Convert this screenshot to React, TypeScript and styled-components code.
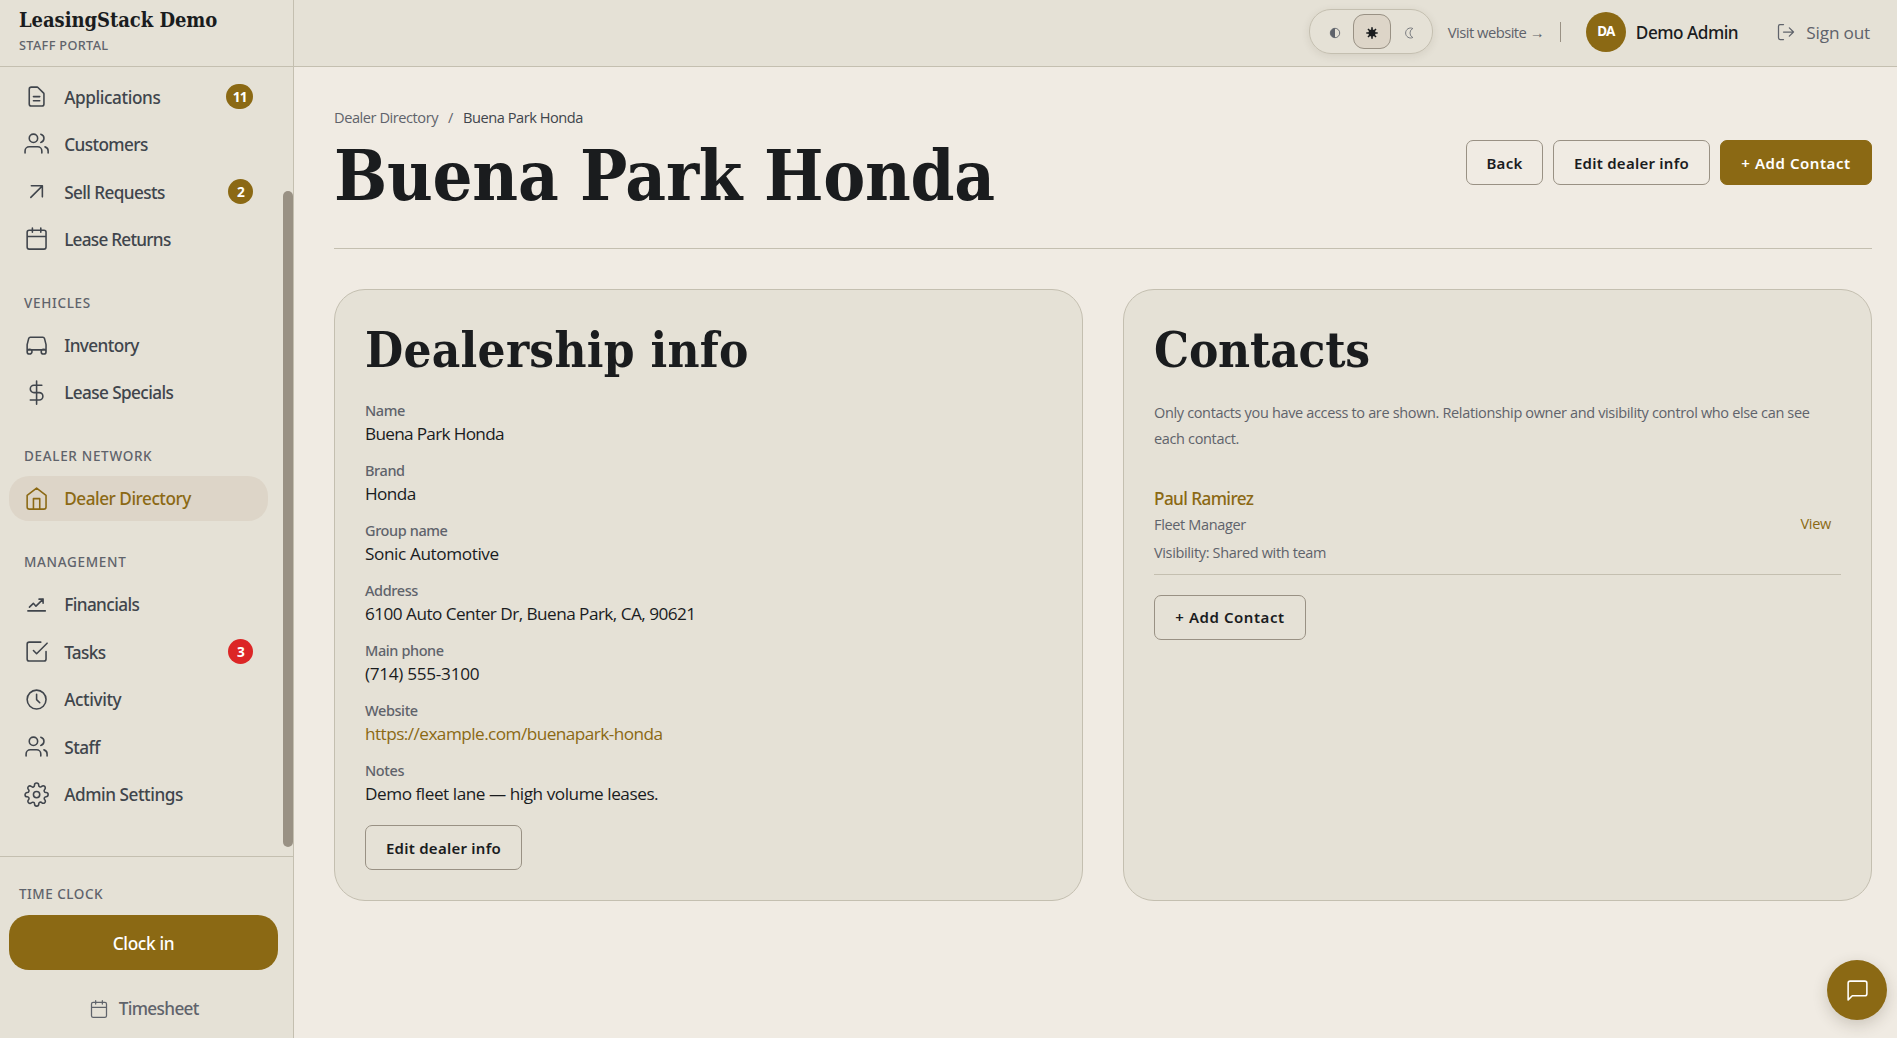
import React from "react";
import styled, { createGlobalStyle, css } from "styled-components";

const c = {
  page: "#f0ebe3",
  panel: "#e5e1d6",
  line: "#c4bfb0",
  strong: "#999184",
  gold: "#8b6914",
  ink: "#1a1c1e",
  text: "#40454c",
  muted: "#5f636b",
  active: "#ddd5c8",
  red: "#dc2626",
};
const sans = `"Open Sans", "Noto Sans", sans-serif`;
const sansMedium = `"Noto Sans", "Open Sans", sans-serif`;
const serif = `"DejaVu Serif Condensed", "DejaVu Serif", serif`;

const Global = createGlobalStyle`
  *, *::before, *::after { box-sizing: border-box; }
  body { margin: 0; background: ${c.page}; color: ${c.ink}; font: 400 17px/1.5 ${sans}; overflow: hidden; }
  button { font: inherit; cursor: pointer; }
  a { color: inherit; text-decoration: none; }
  h1, h2, p, dl, dt, dd { margin: 0; }
`;

const Shell = styled.div`
  display: grid;
  grid-template-columns: 294px minmax(0, 1fr);
  height: 100vh;
`;

/* Sidebar */
const Sidebar = styled.aside`
  display: flex;
  flex-direction: column;
  min-height: 0;
  background: ${c.panel};
  border-right: 1px solid ${c.line};
`;
const Brand = styled.div`
  flex: none;
  height: 67px;
  padding: 8px 0 0 19px;
  border-bottom: 1px solid ${c.line};
`;
const BrandName = styled.div`
  font: 700 20px/24px ${serif};
  letter-spacing: -0.05px;
  white-space: nowrap;
`;
const BrandSub = styled.div`
  margin-top: 3px;
  font: 500 12.7px/20px ${sansMedium};
  letter-spacing: 0.35px;
  color: ${c.muted};
`;
const NavArea = styled.div`
  flex: 1;
  min-height: 0;
  display: flex;
  justify-content: space-between;
`;
const Nav = styled.nav`
  width: 259px;
  margin: 7px 0 0 9px;
`;
const Group = styled.div`
  display: flex;
  flex-direction: column;
  gap: 2.25px;
  padding-bottom: 2.25px;
`;
const GroupLabel = styled.div`
  display: flex;
  align-items: flex-end;
  height: 56.25px;
  padding: 0 0 7.5px 15px;
  font: 500 13.5px/20px ${sansMedium};
  letter-spacing: 0.68px;
  color: ${c.muted};
`;
const NavItem = styled.a<{ $active?: boolean }>`
  display: flex;
  align-items: center;
  height: 45.22px;
  padding: 0 15px;
  border-radius: 20px;
  color: ${(p) => (p.$active ? c.gold : c.text)};
  background: ${(p) => (p.$active ? c.active : "transparent")};
`;
const NavText = styled.span<{ $ls?: number }>`
  flex: 1;
  margin-left: 15px;
  padding-top: 2px;
  font: 500 17.2px/24px ${sansMedium};
  letter-spacing: ${(p) => p.$ls ?? -0.6}px;
`;
const Badge = styled.span<{ $red?: boolean }>`
  min-width: 25px;
  height: 25px;
  padding: 0 6.5px;
  border-radius: 13px;
  background: ${(p) => (p.$red ? c.red : c.gold)};
  color: #fff;
  font: 700 13.7px/25px ${sansMedium};
  letter-spacing: -1px;
  text-align: center;
`;
const ScrollThumb = styled.div`
  width: 10px;
  height: 656px;
  margin-top: 124px;
  border-radius: 5px;
  background: ${c.strong};
`;
const Clock = styled.div`
  flex: none;
  display: flex;
  flex-direction: column;
  height: 182px;
  padding: 27px 15px 0 9px;
  border-top: 1px solid ${c.line};
`;
const ClockLabel = styled.div`
  padding-left: 10px;
  font: 500 13.5px/20px ${sansMedium};
  letter-spacing: 0.5px;
  color: ${c.muted};
`;
const ClockButton = styled.button`
  height: 55px;
  margin-top: 11px;
  padding: 2px 0 0;
  border: 0;
  border-radius: 20px;
  background: ${c.gold};
  color: #fff;
  font: 500 17.3px/24px ${sansMedium};
  letter-spacing: -0.35px;
`;
const Timesheet = styled.a`
  display: flex;
  justify-content: center;
  align-items: center;
  gap: 9.5px;
  margin-top: 26.5px;
  padding-left: 1px;
  color: ${c.muted};
  font: 500 17.2px/24px ${sansMedium};
  letter-spacing: -0.65px;
`;

/* Top bar */
const Main = styled.div`
  display: flex;
  flex-direction: column;
  min-width: 0;
`;
const TopBar = styled.header`
  flex: none;
  display: flex;
  justify-content: flex-end;
  align-items: center;
  height: 67px;
  padding: 0 27px 3px 0;
  background: ${c.panel};
  border-bottom: 1px solid ${c.line};
  white-space: nowrap;
`;
const ThemeSwitch = styled.div`
  display: flex;
  justify-content: space-between;
  width: 124px;
  height: 45px;
  margin-right: 15px;
  padding: 4px 5px 4px 7px;
  border: 1px solid ${c.line};
  border-radius: 22px;
  box-shadow: 0 2px 9px rgba(60, 50, 30, 0.1);
`;
const ThemeOption = styled.button<{ $on?: boolean }>`
  display: flex;
  align-items: center;
  justify-content: center;
  width: ${(p) => (p.$on ? 38 : 36)}px;
  height: 35px;
  padding: 3px 0 0;
  border: 1px solid ${(p) => (p.$on ? c.strong : "transparent")};
  border-radius: 11px;
  background: ${(p) => (p.$on ? c.active : "transparent")};
  color: ${(p) => (p.$on ? c.ink : c.muted)};
`;
const VisitLink = styled.a`
  width: 112px;
  padding-top: 2px;
  font-size: 14.8px;
  letter-spacing: -0.55px;
  color: ${c.muted};
`;
const Divider = styled.span`
  width: 1px;
  height: 20px;
  background: ${c.strong};
`;
const Avatar = styled.span`
  width: 40px;
  height: 40px;
  margin: 0 10px 0 25px;
  border-radius: 50%;
  background: ${c.gold};
  color: #fff;
  font: 700 13.5px/38px ${sansMedium};
  letter-spacing: -0.8px;
  text-align: center;
`;
const UserName = styled.span`
  width: 140.5px;
  padding-top: 2.5px;
  font: 500 17.2px/24px ${sansMedium};
  letter-spacing: -0.5px;
`;
const SignOut = styled.a`
  display: flex;
  align-items: center;
  gap: 10px;
  color: ${c.muted};
  font-size: 17.2px;
  letter-spacing: -0.18px;
  line-height: 24px;
`;
const SignOutText = styled.span`
  padding-top: 2.5px;
`;

/* Page */
const Page = styled.main`
  padding: 38px 25px 0 40px;
`;
const PageHead = styled.div`
  display: flex;
  justify-content: space-between;
  align-items: center;
  padding-bottom: 36px;
  border-bottom: 1px solid ${c.line};
`;
const Crumbs = styled.div`
  display: flex;
  gap: 10px;
  font-size: 14.6px;
  line-height: 25px;
  letter-spacing: -0.45px;
  color: ${c.muted};
`;
const CrumbHere = styled.span`
  color: ${c.text};
`;
const Title = styled.h1`
  margin-top: 10px;
  font: 700 70px/72px ${serif};
  letter-spacing: -0.25px;
  white-space: nowrap;
`;
const Actions = styled.div`
  display: flex;
  gap: 10px;
  padding-top: 8px;
`;
const Button = styled.button<{ $primary?: boolean; $w: number; $ls?: number }>`
  width: ${(p) => p.$w}px;
  height: 45px;
  padding: 0;
  border: 1px solid ${c.strong};
  border-radius: 7px;
  background: transparent;
  color: ${c.ink};
  font: 600 15px/22px ${sansMedium};
  letter-spacing: ${(p) => p.$ls ?? 0.25}px;
  white-space: nowrap;
  ${(p) =>
    p.$primary &&
    css`
      border-color: ${c.gold};
      background: ${c.gold};
      color: #fff;
    `}
`;
const Cards = styled.div`
  display: grid;
  grid-template-columns: 1fr 1fr;
  gap: 40px;
  margin-top: 40px;
`;
const Card = styled.section`
  height: 612px;
  padding: 31px 30px;
  border: 1px solid ${c.line};
  border-radius: 31px;
  background: ${c.panel};
`;
const CardTitle = styled.h2<{ $ls: number }>`
  margin-bottom: 19.5px;
  font: 700 49px/59.5px ${serif};
  letter-spacing: ${(p) => p.$ls}px;
`;
const Fields = styled.dl`
  display: flex;
  flex-direction: column;
  gap: 14px;
  margin-bottom: 19px;
`;
const FieldName = styled.dt`
  margin-bottom: 2px;
  font: 500 14.5px/20px ${sansMedium};
  letter-spacing: -0.4px;
  color: ${c.muted};
`;
const FieldValue = styled.dd<{ $link?: boolean; $ls?: number }>`
  font-size: 17.2px;
  line-height: 24px;
  letter-spacing: ${(p) => p.$ls ?? -0.54}px;
  color: ${(p) => (p.$link ? c.gold : c.ink)};
`;
const Hint = styled.p`
  font-size: 14.5px;
  line-height: 26px;
  letter-spacing: -0.345px;
  color: ${c.muted};
`;
const Contact = styled.div`
  display: flex;
  justify-content: space-between;
  align-items: center;
  margin: 33.6px 0 20px;
  padding: 0 10px 9px 0;
  border-bottom: 1px solid ${c.line};
`;
const ContactName = styled.div`
  font: 500 17.2px/26px ${sansMedium};
  letter-spacing: -0.6px;
  color: ${c.gold};
`;
const ContactMeta = styled.div`
  font-size: 14.5px;
  line-height: 25px;
  letter-spacing: -0.35px;
  color: ${c.muted};
  & + & {
    margin-top: 3px;
  }
`;
const ViewLink = styled.a`
  padding-bottom: 2px;
  font-size: 14.5px;
  letter-spacing: -0.3px;
  color: ${c.gold};
`;
const ChatButton = styled.button`
  position: fixed;
  right: 10px;
  bottom: 18px;
  display: flex;
  align-items: center;
  justify-content: center;
  width: 60px;
  height: 60px;
  padding: 0;
  border: 0;
  border-radius: 50%;
  background: ${c.gold};
  color: #fff;
  box-shadow: 0 5px 15px rgba(60, 50, 30, 0.2);
`;

/* Icons on a 24-unit grid */
const Svg = styled.svg<{ $size?: number }>`
  flex: none;
  width: ${(p) => p.$size ?? 25.2}px;
  height: ${(p) => p.$size ?? 25.2}px;
  fill: none;
  stroke: currentColor;
  stroke-width: 1.5;
  stroke-linecap: round;
  stroke-linejoin: round;
`;
const paths = {
  document:
    "M9 12h6M9 16h6M17 21H7a2 2 0 0 1-2-2V5a2 2 0 0 1 2-2h5.586a1 1 0 0 1 .707.293l5.414 5.414a1 1 0 0 1 .293.707V19a2 2 0 0 1-2 2z",
  usersWide:
    "M17 21v-2a4 4 0 0 0-4-4H5a4 4 0 0 0-4 4v2M23 21v-2a4 4 0 0 0-3-3.87M16 3.13a4 4 0 0 1 0 7.75M13 7a4 4 0 1 1-8 0 4 4 0 0 1 8 0z",
  users:
    "M16 21v-2a4 4 0 0 0-4-4H6a4 4 0 0 0-4 4v2M22 21v-2a4 4 0 0 0-3-3.87M16 3.13a4 4 0 0 1 0 7.75M13 7a4 4 0 1 1-8 0 4 4 0 0 1 8 0z",
  arrow: "M6.5 17.5L17.5 6.5M7 6.5h10.5V17",
  calendar:
    "M5 4h14a2 2 0 0 1 2 2v14a2 2 0 0 1-2 2H5a2 2 0 0 1-2-2V6a2 2 0 0 1 2-2zM16 2v4M8 2v4M3 10h18",
  car: "M6 5h12a1.6 1.6 0 0 1 1.5 1.1L21 12v5H3v-5l1.5-5.9A1.6 1.6 0 0 1 6 5zM3 17v1.7M21 17v1.7M7.6 18.7a2.3 2.3 0 1 1-4.6 0 2.3 2.3 0 0 1 4.6 0zM21 18.7a2.3 2.3 0 1 1-4.6 0 2.3 2.3 0 0 1 4.6 0z",
  dollar: "M12 1v22M17 5H9.5a3.5 3.5 0 0 0 0 7h5a3.5 3.5 0 0 1 0 7H6",
  home: "M3 9l9-7 9 7v11a2 2 0 0 1-2 2H5a2 2 0 0 1-2-2zM9 22V12h6v10",
  trend: "M3.7 18h16.6M5.2 14.4L8.9 10.8l2.5 2.7 6.8-6.7M14.3 6.8h3.9v3.9",
  check: "M9 11l3 3L22 4M21 12v7a2 2 0 0 1-2 2H5a2 2 0 0 1-2-2V5a2 2 0 0 1 2-2h11",
  clock: "M21 12a9 9 0 1 1-18 0 9 9 0 0 1 18 0zM12 7v5l3 3",
  gear: "M15 12a3 3 0 1 1-6 0 3 3 0 0 1 6 0zM19.4 15a1.65 1.65 0 0 0 .33 1.82l.06.06a2 2 0 0 1 0 2.83 2 2 0 0 1-2.83 0l-.06-.06a1.65 1.65 0 0 0-1.82-.33 1.65 1.65 0 0 0-1 1.51V21a2 2 0 0 1-2 2 2 2 0 0 1-2-2v-.09A1.65 1.65 0 0 0 9 19.4a1.65 1.65 0 0 0-1.82.33l-.06.06a2 2 0 0 1-2.83 0 2 2 0 0 1 0-2.83l.06-.06a1.65 1.65 0 0 0 .33-1.82 1.65 1.65 0 0 0-1.51-1H3a2 2 0 0 1-2-2 2 2 0 0 1 2-2h.09A1.65 1.65 0 0 0 4.6 9a1.65 1.65 0 0 0-.33-1.82l-.06-.06a2 2 0 0 1 0-2.83 2 2 0 0 1 2.83 0l.06.06a1.65 1.65 0 0 0 1.82.33H9a1.65 1.65 0 0 0 1-1.51V3a2 2 0 0 1 2-2 2 2 0 0 1 2 2v.09a1.65 1.65 0 0 0 1 1.51 1.65 1.65 0 0 0 1.82-.33l.06-.06a2 2 0 0 1 2.83 0 2 2 0 0 1 0 2.83l-.06.06a1.65 1.65 0 0 0-.33 1.82V9a1.65 1.65 0 0 0 1.51 1H21a2 2 0 0 1 2 2 2 2 0 0 1-2 2h-.09a1.65 1.65 0 0 0-1.51 1z",
  logout: "M9 21H5a2 2 0 0 1-2-2V5a2 2 0 0 1 2-2h4M16 17l5-5-5-5M21 12H9",
  chat: "M21 15a2 2 0 0 1-2 2H7l-4 4V5a2 2 0 0 1 2-2h14a2 2 0 0 1 2 2z",
};
type IconName = keyof typeof paths;
const Icon = ({ name, size }: { name: IconName; size?: number }) => (
  <Svg $size={size} viewBox="0 0 24 24" aria-hidden>
    <path d={paths[name]} />
  </Svg>
);

const Glyph = styled.svg`
  width: 14px;
  height: 14px;
  fill: currentColor;
  stroke: currentColor;
`;
const HalfGlyph = () => (
  <Glyph viewBox="0 0 14 14">
    <circle cx="7" cy="7" r="4.7" fill="none" strokeWidth="0.9" />
    <path d="M7 2.3a4.7 4.7 0 0 1 0 9.4z" stroke="none" transform="rotate(180 7 7)" />
  </Glyph>
);
const SunGlyph = () => (
  <Glyph viewBox="0 0 14 14">
    <circle cx="7" cy="7" r="3.5" stroke="none" />
    <path d="M7 1.3v11.4M1.3 7h11.4M3 3l8 8M11 3l-8 8" fill="none" strokeWidth="1.6" />
  </Glyph>
);
const MoonGlyph = () => (
  <Glyph viewBox="0 0 14 14">
    <path d="M10.8 2.5a5 5 0 1 0 0 9 5 5 0 0 1 0-9z" fill="none" strokeWidth="0.8" />
  </Glyph>
);

type Item = { icon: IconName; label: string; badge?: string; red?: boolean; active?: boolean; ls?: number };
const groups: { label?: string; items: Item[] }[] = [
  {
    items: [
      { icon: "document", label: "Applications", badge: "11", ls: -0.4 },
      { icon: "usersWide", label: "Customers" },
      { icon: "arrow", label: "Sell Requests", badge: "2", ls: -0.6 },
      { icon: "calendar", label: "Lease Returns", ls: -0.75 },
    ],
  },
  {
    label: "VEHICLES",
    items: [
      { icon: "car", label: "Inventory" },
      { icon: "dollar", label: "Lease Specials", ls: -0.6 },
    ],
  },
  { label: "DEALER NETWORK", items: [{ icon: "home", label: "Dealer Directory", active: true, ls: -0.48 }] },
  {
    label: "MANAGEMENT",
    items: [
      { icon: "trend", label: "Financials" },
      { icon: "check", label: "Tasks", badge: "3", red: true },
      { icon: "clock", label: "Activity", ls: -0.4 },
      { icon: "users", label: "Staff", ls: -0.5 },
      { icon: "gear", label: "Admin Settings", ls: -0.45 },
    ],
  },
];

const fields: { name: string; value: string; link?: boolean; ls?: number }[] = [
  { name: "Name", value: "Buena Park Honda", ls: -0.69 },
  { name: "Brand", value: "Honda", ls: -0.6 },
  { name: "Group name", value: "Sonic Automotive", ls: -0.4 },
  { name: "Address", value: "6100 Auto Center Dr, Buena Park, CA, 90621" },
  { name: "Main phone", value: "(714) 555-3100", ls: -0.3 },
  { name: "Website", value: "https://example.com/buenapark-honda", link: true },
  { name: "Notes", value: "Demo fleet lane — high volume leases.", ls: -0.46 },
];

export default function App() {
  return (
    <>
      <Global />
      <Shell>
        <Sidebar>
          <Brand>
            <BrandName>LeasingStack Demo</BrandName>
            <BrandSub>STAFF PORTAL</BrandSub>
          </Brand>
          <NavArea>
            <Nav>
              {groups.map((g, i) => (
                <Group key={i}>
                  {g.label && <GroupLabel>{g.label}</GroupLabel>}
                  {g.items.map((it) => (
                    <NavItem key={it.label} $active={it.active}>
                      <Icon name={it.icon} />
                      <NavText $ls={it.ls}>{it.label}</NavText>
                      {it.badge && <Badge $red={it.red}>{it.badge}</Badge>}
                    </NavItem>
                  ))}
                </Group>
              ))}
            </Nav>
            <ScrollThumb />
          </NavArea>
          <Clock>
            <ClockLabel>TIME CLOCK</ClockLabel>
            <ClockButton>Clock in</ClockButton>
            <Timesheet>
              <Icon name="calendar" size={20} />
              Timesheet
            </Timesheet>
          </Clock>
        </Sidebar>
        <Main>
          <TopBar>
            <ThemeSwitch>
              <ThemeOption aria-label="System theme"><HalfGlyph /></ThemeOption>
              <ThemeOption $on aria-label="Light theme"><SunGlyph /></ThemeOption>
              <ThemeOption aria-label="Dark theme"><MoonGlyph /></ThemeOption>
            </ThemeSwitch>
            <VisitLink>Visit website →</VisitLink>
            <Divider />
            <Avatar>DA</Avatar>
            <UserName>Demo Admin</UserName>
            <SignOut>
              <Icon name="logout" size={20} />
              <SignOutText>Sign out</SignOutText>
            </SignOut>
          </TopBar>
          <Page>
            <PageHead>
              <div>
                <Crumbs>
                  <a>Dealer Directory</a>
                  <span>/</span>
                  <CrumbHere>Buena Park Honda</CrumbHere>
                </Crumbs>
                <Title>Buena Park Honda</Title>
              </div>
              <Actions>
                <Button $w={77}>Back</Button>
                <Button $w={157}>Edit dealer info</Button>
                <Button $w={152} $ls={0.55} $primary>+ Add Contact</Button>
              </Actions>
            </PageHead>
            <Cards>
              <Card>
                <CardTitle $ls={0.25}>Dealership info</CardTitle>
                <Fields>
                  {fields.map((f) => (
                    <div key={f.name}>
                      <FieldName>{f.name}</FieldName>
                      <FieldValue $link={f.link} $ls={f.ls}>{f.value}</FieldValue>
                    </div>
                  ))}
                </Fields>
                <Button $w={157}>Edit dealer info</Button>
              </Card>
              <Card>
                <CardTitle $ls={-0.2}>Contacts</CardTitle>
                <Hint>
                  Only contacts you have access to are shown. Relationship owner and visibility control who else can see
                  each contact.
                </Hint>
                <Contact>
                  <div>
                    <ContactName>Paul Ramirez</ContactName>
                    <ContactMeta>Fleet Manager</ContactMeta>
                    <ContactMeta>Visibility: Shared with team</ContactMeta>
                  </div>
                  <ViewLink>View</ViewLink>
                </Contact>
                <Button $w={152} $ls={0.55}>+ Add Contact</Button>
              </Card>
            </Cards>
          </Page>
        </Main>
      </Shell>
      <ChatButton aria-label="Open chat">
        <Icon name="chat" size={25} />
      </ChatButton>
    </>
  );
}
